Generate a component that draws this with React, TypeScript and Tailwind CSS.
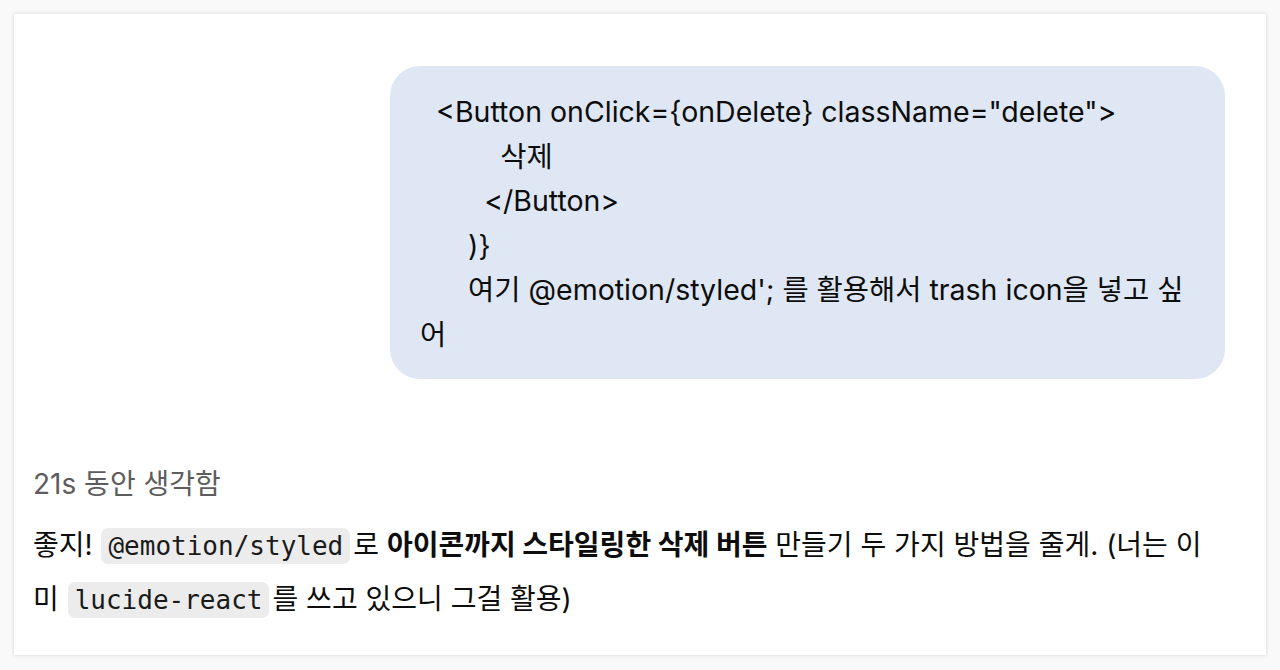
const sans = "font-['Inter','Noto_Sans_CJK_KR',sans-serif]";

const bubbleText = `  <Button onClick={onDelete} className="delete">
          삭제
        </Button>
      )}
      여기 @emotion/styled'; 를 활용해서 trash icon을 넣고 싶
어`;

const Code = ({ children }: { children: string }) => (
  <code className="ml-[1px] mr-[3px] rounded-[7px] bg-[#ececec] px-[7px] py-[3px] font-['DejaVu_Sans_Mono',monospace] text-[26px] text-[#1a1a1a]">
    {children}
  </code>
);

const App = () => {
  return (
    <div className={`min-h-[670px] bg-[#f9f9f9] p-[14px] ${sans}`}>
      <div className="h-[641px] bg-white pl-[19px] pr-[41px] pt-[52px] shadow-[0_0_4px_rgba(0,0,0,0.14)]">
        {/* user message */}
        <div className="flex justify-end">
          <div className="w-[835px] rounded-[30px] bg-[#dee7f3] px-[30px] pb-[22px] pt-[24px] text-[28.5px] leading-[44.5px] text-[#0d0d0d] whitespace-pre-wrap">
            {bubbleText}
          </div>
        </div>

        {/* assistant reply */}
        <div className="mt-[88px] text-[28px] leading-[35px] text-[#5d5d5d]">21s 동안 생각함</div>
        <p className="mt-[17px] text-[28px] leading-[53px] text-[#0d0d0d]">
          좋지! <Code>@emotion/styled</Code>로 <b className="font-bold">아이콘까지 스타일링한 삭제 버튼</b> 만들기 두
          가지 방법을 줄게. (너는 이
          <br />미 <Code>lucide-react</Code>를 쓰고 있으니 그걸 활용)
        </p>
      </div>
    </div>
  );
};

export default App;
